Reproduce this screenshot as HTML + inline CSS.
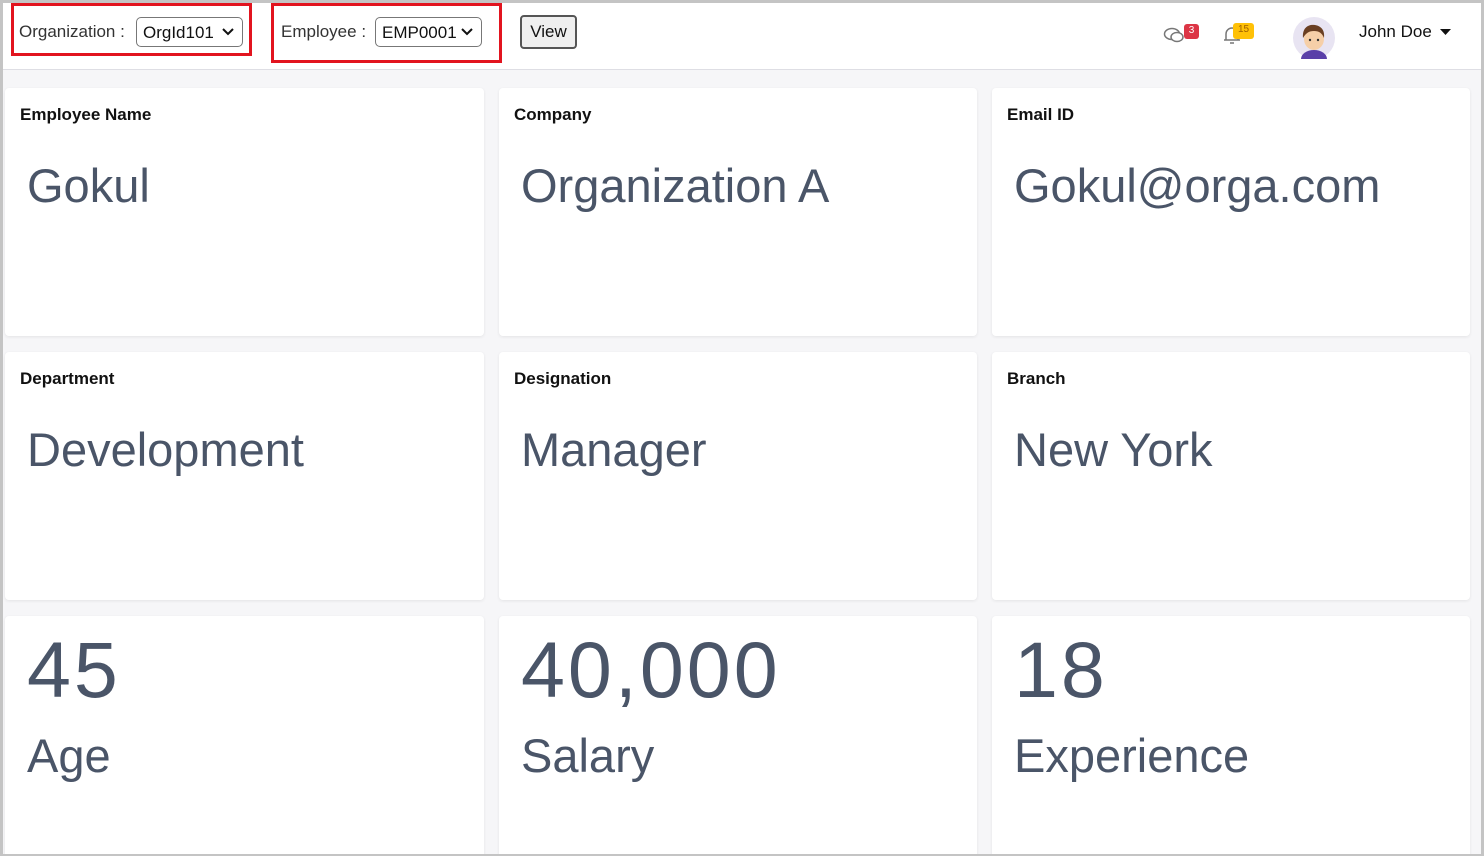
<!DOCTYPE html>
<html><head><style>
*{box-sizing:border-box;margin:0;padding:0}
html,body{width:1484px;height:856px;overflow:hidden}
body{font-family:"Liberation Sans",sans-serif;background:#f6f6f8;position:relative}
.frame{position:absolute;inset:0;border:3px solid #c4c4c4;border-bottom-width:2px;pointer-events:none;z-index:5}
.hdr{position:absolute;left:0;top:0;width:1484px;height:70px;background:#fff;border-bottom:1px solid #dedee4}
.red{position:absolute;border:3px solid #e2141f}
.lbl{position:absolute;font-size:17px;color:#333}
.sel{position:absolute;height:30px;border:1px solid #777;border-radius:5px;font-size:17px;color:#111;padding:5px 0 0 6px;background:#fff}
.sel svg{position:absolute;right:8px;top:10px}
.btn{position:absolute;left:520px;top:15px;width:57px;height:34px;border:2px solid #555;border-radius:4px;background:#efefef;font-size:17px;color:#111;text-align:center;padding-top:5px}
.card{position:absolute;background:#fff;border-radius:4px;box-shadow:0 1px 3px rgba(0,0,0,.08)}
.t{position:absolute;left:15px;top:17px;font-weight:bold;font-size:17px;color:#111}
.v{position:absolute;left:22px;top:70px;font-size:47px;color:#4a5568;white-space:nowrap}
.n{position:absolute;left:22px;top:8px;font-size:79px;color:#4a5568;letter-spacing:3px}
.l{position:absolute;left:22px;top:112px;font-size:47px;color:#4a5568}
.badge{position:absolute;font-size:10px;text-align:center;border-radius:3px;line-height:14px}
</style></head><body>
<div class="hdr">
  <div class="red" style="left:11px;top:3px;width:241px;height:53px"></div>
  <div class="lbl" style="left:19px;top:22px">Organization :</div>
  <div class="sel" style="left:136px;top:17px;width:107px">OrgId101<svg width="12" height="8"><path d="M1 1l5 5 5-5" stroke="#111" stroke-width="2" fill="none"/></svg></div>
  <div class="red" style="left:271px;top:3px;width:231px;height:60px"></div>
  <div class="lbl" style="left:281px;top:22px">Employee :</div>
  <div class="sel" style="left:375px;top:17px;width:107px">EMP0001<svg width="12" height="8"><path d="M1 1l5 5 5-5" stroke="#111" stroke-width="2" fill="none"/></svg></div>
  <div class="btn">View</div>
  <svg style="position:absolute;left:1163px;top:26px" width="24" height="20"><ellipse cx="9" cy="8" rx="7.5" ry="5.5" fill="none" stroke="#777" stroke-width="1.5"/><ellipse cx="14" cy="11" rx="6" ry="4.5" fill="#fff" stroke="#777" stroke-width="1.5"/></svg>
  <div class="badge" style="left:1184px;top:24px;width:15px;height:15px;background:#dc3545;color:#fff">3</div>
  <svg style="position:absolute;left:1222px;top:25px" width="20" height="20"><path d="M4 15V9a6 6 0 0 1 12 0v6zM2 15h16M8 18h4" fill="none" stroke="#777" stroke-width="1.5"/></svg>
  <div class="badge" style="left:1233px;top:23px;width:21px;height:16px;background:#ffc107;color:#a06000">15</div>
  <svg style="position:absolute;left:1293px;top:17px" width="42" height="42"><circle cx="21" cy="21" r="21" fill="#e8e4f2"/><path d="M8 42a13 9 0 0 1 26 0z" fill="#5a3fa8"/><ellipse cx="21" cy="22" rx="10" ry="11" fill="#f6cfa8"/><path d="M10 21c-1-11 6-14 12-13s10 5 9 13c-2-5-5-7-10-7-5 0-8 2-11 7z" fill="#6a3f23"/><circle cx="17" cy="23" r="1.2" fill="#333"/><circle cx="25" cy="23" r="1.2" fill="#333"/></svg>
  <div class="lbl" style="left:1359px;top:22px;color:#111">John Doe</div>
  <svg style="position:absolute;left:1440px;top:29px" width="11" height="6"><path d="M0 0h11L5.5 6z" fill="#111"/></svg>
</div>
<div class="card" style="left:5px;top:88px;width:479px;height:248px"><div class="t">Employee Name</div><div class="v">Gokul</div></div>
<div class="card" style="left:499px;top:88px;width:478px;height:248px"><div class="t">Company</div><div class="v">Organization A</div></div>
<div class="card" style="left:992px;top:88px;width:478px;height:248px"><div class="t">Email ID</div><div class="v">Gokul@orga.com</div></div>
<div class="card" style="left:5px;top:352px;width:479px;height:248px"><div class="t">Department</div><div class="v">Development</div></div>
<div class="card" style="left:499px;top:352px;width:478px;height:248px"><div class="t">Designation</div><div class="v">Manager</div></div>
<div class="card" style="left:992px;top:352px;width:478px;height:248px"><div class="t">Branch</div><div class="v">New York</div></div>
<div class="card" style="left:5px;top:616px;width:479px;height:260px"><div class="n">45</div><div class="l">Age</div></div>
<div class="card" style="left:499px;top:616px;width:478px;height:260px"><div class="n">40,000</div><div class="l">Salary</div></div>
<div class="card" style="left:992px;top:616px;width:478px;height:260px"><div class="n">18</div><div class="l">Experience</div></div>
<div class="frame"></div>
</body></html>
